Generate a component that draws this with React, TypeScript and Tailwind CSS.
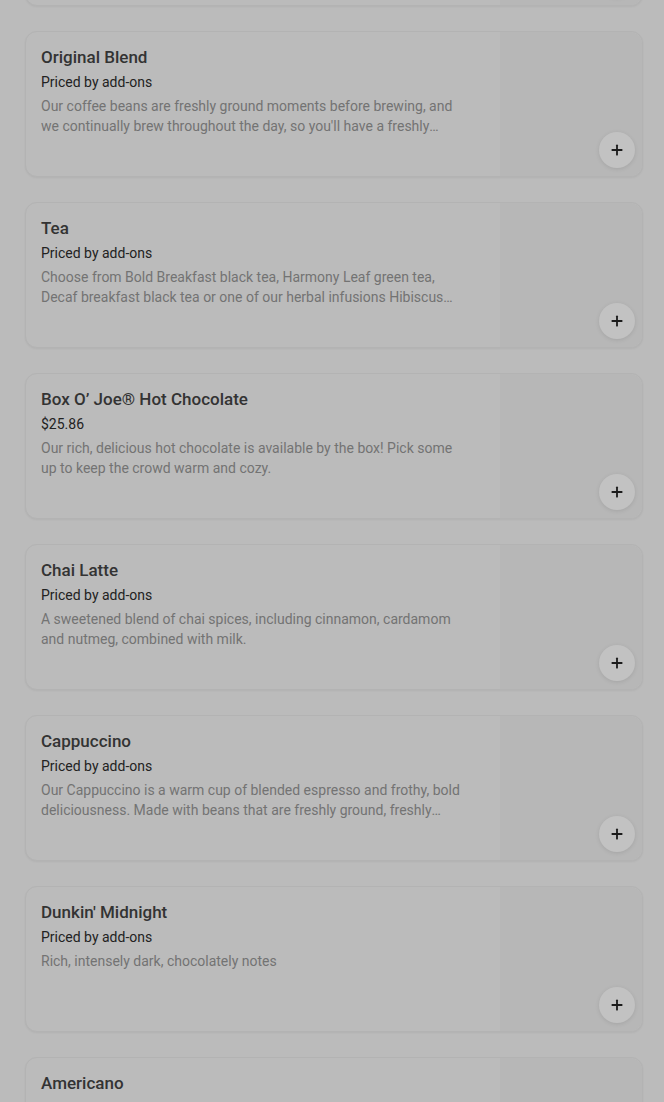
import { Plus } from 'lucide-react';

interface MenuItem {
  id: string;
  name: string;
  price: string;
  description: string;
}

const items: MenuItem[] = [
  { id: '0', name: '', price: '', description: '' },
  {
    id: '1',
    name: 'Original Blend',
    price: 'Priced by add-ons',
    description:
      "Our coffee beans are freshly ground moments before brewing, and we continually brew throughout the day, so you'll have a freshly brewed cup every time.",
  },
  {
    id: '2',
    name: 'Tea',
    price: 'Priced by add-ons',
    description:
      'Choose from Bold Breakfast black tea, Harmony Leaf green tea, Decaf breakfast black tea or one of our herbal infusions Hibiscus Chamomile or Peppermint.',
  },
  {
    id: '3',
    name: 'Box O\u2019 Joe\u00ae Hot Chocolate',
    price: '$25.86',
    description: 'Our rich, delicious hot chocolate is available by the box! Pick some up to keep the crowd warm and cozy.',
  },
  {
    id: '4',
    name: 'Chai Latte',
    price: 'Priced by add-ons',
    description: 'A sweetened blend of chai spices, including cinnamon, cardamom and nutmeg, combined with milk.',
  },
  {
    id: '5',
    name: 'Cappuccino',
    price: 'Priced by add-ons',
    description:
      'Our Cappuccino is a warm cup of blended espresso and frothy, bold deliciousness. Made with beans that are freshly ground, freshly brewed.',
  },
  {
    id: '6',
    name: "Dunkin' Midnight",
    price: 'Priced by add-ons',
    description: 'Rich, intensely dark, chocolately notes',
  },
  {
    id: '7',
    name: 'Americano',
    price: 'Priced by add-ons',
    description: 'Espresso shots topped with hot water.',
  },
];

function MenuCard({ item }: { item: MenuItem }) {
  return (
    <div className="relative flex h-[146px] shrink-0 overflow-hidden rounded-xl border border-[#b3b3b3] bg-[#bbbbbb] shadow-[0_1px_2px_rgba(0,0,0,0.05)]">
      <div className="flex-1 px-[15px] pt-[14px]">
        {item.name && (
          <>
            <div className="text-[17px] font-medium leading-[22px] text-[#333333]">{item.name}</div>
            <div className="mt-[4px] text-[14px] leading-[20px] text-[#222222]">{item.price}</div>
            <div className="mt-[4px] line-clamp-2 max-w-[430px] text-[14px] leading-[20px] text-[#737373]">
              {item.description}
            </div>
          </>
        )}
      </div>
      <div className="w-[142px] shrink-0 rounded-r-xl bg-[#b7b7b7]" />
      <button className="absolute bottom-[8px] right-[7px] flex h-[36px] w-[36px] items-center justify-center rounded-full bg-[#c2c2c2] shadow-[0_1px_4px_rgba(0,0,0,0.1)]">
        <Plus size={16} strokeWidth={2.75} className="text-[#1c1c1c]" />
      </button>
    </div>
  );
}

export default function App() {
  return (
    <div
      className="h-[1102px] w-full overflow-hidden bg-[#bbbbbb]"
      style={{ fontFamily: 'Roboto, "Liberation Sans", sans-serif' }}
    >
      <div className="-mt-[140px] flex flex-col gap-[25px] pl-[25px] pr-[21px]">
        {items.map(item => (
          <MenuCard key={item.id} item={item} />
        ))}
      </div>
    </div>
  );
}
